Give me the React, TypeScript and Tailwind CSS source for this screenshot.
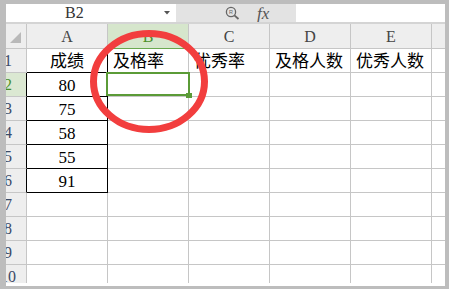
import React from "react";

const FONT = { fontFamily: "'Liberation Serif', 'Noto Sans CJK SC', serif" };

const COLS = ["A", "B", "C", "D", "E"];
const HEAD = ["成绩", "及格率", "优秀率", "及格人数", "优秀人数"];
const SCORES = ["80", "75", "58", "55", "91"];

function RowHead({ n, active, dark }: { n: number; active?: boolean; dark?: boolean }) {
    return (
        <div
            className={`w-[37px] -ml-[16px] shrink-0 flex items-center justify-center border-r border-b border-b-[#c6c6c6] text-[16px] ${
                active ? "bg-[#dbe8d2] text-[#4b8f2a]" : "bg-[#eeeeee] text-[#3c4a66]"
            } ${dark ? "border-r-black" : "border-r-[#c6c6c6]"}`}
        >
            {n}
        </div>
    );
}

function Row({ n }: { n: number }) {
    const scored = n >= 2 && n <= 6;
    return (
        <div className="flex h-[24px] shrink-0">
            <RowHead n={n} active={n === 2} dark={scored} />
            {COLS.map((c, i) => {
                const isA = i === 0;
                const black = isA && n <= 6;
                let text = "";
                if (n === 1) text = HEAD[i];
                if (scored && isA) text = SCORES[n - 2];
                return (
                    <div
                        key={c}
                        className={`w-[81px] shrink-0 flex items-center border-r border-b text-[17px] text-black ${
                            black ? "border-black" : "border-[#c6c6c6]"
                        } ${n === 1 && isA ? "border-b-black" : ""} ${isA ? "justify-center" : "pl-[5px]"}`}
                    >
                        <span className="whitespace-nowrap leading-none pt-[2px]">{text}</span>
                    </div>
                );
            })}
            <div className="flex-1 border-b border-[#c6c6c6]" />
        </div>
    );
}

export default function App() {
    return (
        <div className="relative w-[449px] h-[289px] bg-[#bdbdbd] pl-[6px] pt-[4px] pr-[4px] pb-[3px] overflow-hidden" style={FONT}>
            <div className="flex flex-col h-full bg-white overflow-hidden">
                {/* Formula bar */}
                <div className="flex h-[18px] shrink-0">
                    <div className="w-[170px] flex items-center bg-white pl-[59px] relative">
                        <span className="text-[16px] text-[#333] leading-none">B2</span>
                        <svg className="ml-auto mr-[6px]" width="6" height="4" viewBox="0 0 6 4">
                            <path d="M0,0 L6,0 L3,3.5 Z" fill="#555" />
                        </svg>
                    </div>
                    <div className="w-[120px] bg-[#e3e3e3] flex items-center pl-[49px] gap-[17px]">
                        <svg width="15" height="14" viewBox="0 0 15 14">
                            <circle cx="6" cy="6" r="4.6" fill="none" stroke="#666" strokeWidth="1.3" />
                            <path d="M9.4,9.4 L13.5,13" stroke="#666" strokeWidth="1.8" />
                            <text x="6" y="8" fontSize="5.5" textAnchor="middle" fill="#666" fontFamily="Liberation Sans">R</text>
                        </svg>
                        <span className="italic text-[17px] text-[#555] leading-none">fx</span>
                    </div>
                    <div className="flex-1 bg-white" />
                </div>
                <div className="h-[2px] shrink-0 bg-[#d4d4d4]" />

                {/* Sheet */}
                <div className="flex flex-col h-[259px] overflow-hidden shrink-0">
                    <div className="flex h-[25px] shrink-0 bg-[#eeeeee]">
                        <div className="w-[37px] -ml-[16px] shrink-0 border-r border-b border-[#c6c6c6] flex items-end justify-end pr-[5px] pb-[5px]">
                            <svg width="11" height="11" viewBox="0 0 11 11">
                                <path d="M11,0 L11,11 L0,11 Z" fill="#b9b9b9" />
                            </svg>
                        </div>
                        {COLS.map((c) => (
                            <div
                                key={c}
                                className={`w-[81px] shrink-0 flex items-center justify-center border-r border-[#c6c6c6] text-[16px] border-b ${
                                    c === "B" ? "bg-[#d6e6cc] text-[#4b8f2a] border-b-[#6aa84f]" : "text-[#444]"
                                }`}
                            >
                                <span className="pt-[2px] leading-none">{c}</span>
                            </div>
                        ))}
                        <div className="flex-1 border-b border-[#c6c6c6]" />
                    </div>
                    {[1, 2, 3, 4, 5, 6, 7, 8, 9, 10].map((n) => (
                        <Row key={n} n={n} />
                    ))}
                </div>
            </div>

            {/* Selection of B2 */}
            <div className="absolute left-[106px] top-[72px] w-[84px] h-[24px] border-[2px] border-[#5b9b37]" />
            <div className="absolute left-[186px] top-[93px] w-[6px] h-[5px] bg-[#5b9b37]" />

            {/* Red circle annotation */}
            <svg className="absolute left-0 top-0 pointer-events-none" width="449" height="289">
                <ellipse cx="149" cy="81.5" rx="55.5" ry="48" fill="none" stroke="#f23e3e" strokeWidth="7" />
            </svg>
        </div>
    );
}
